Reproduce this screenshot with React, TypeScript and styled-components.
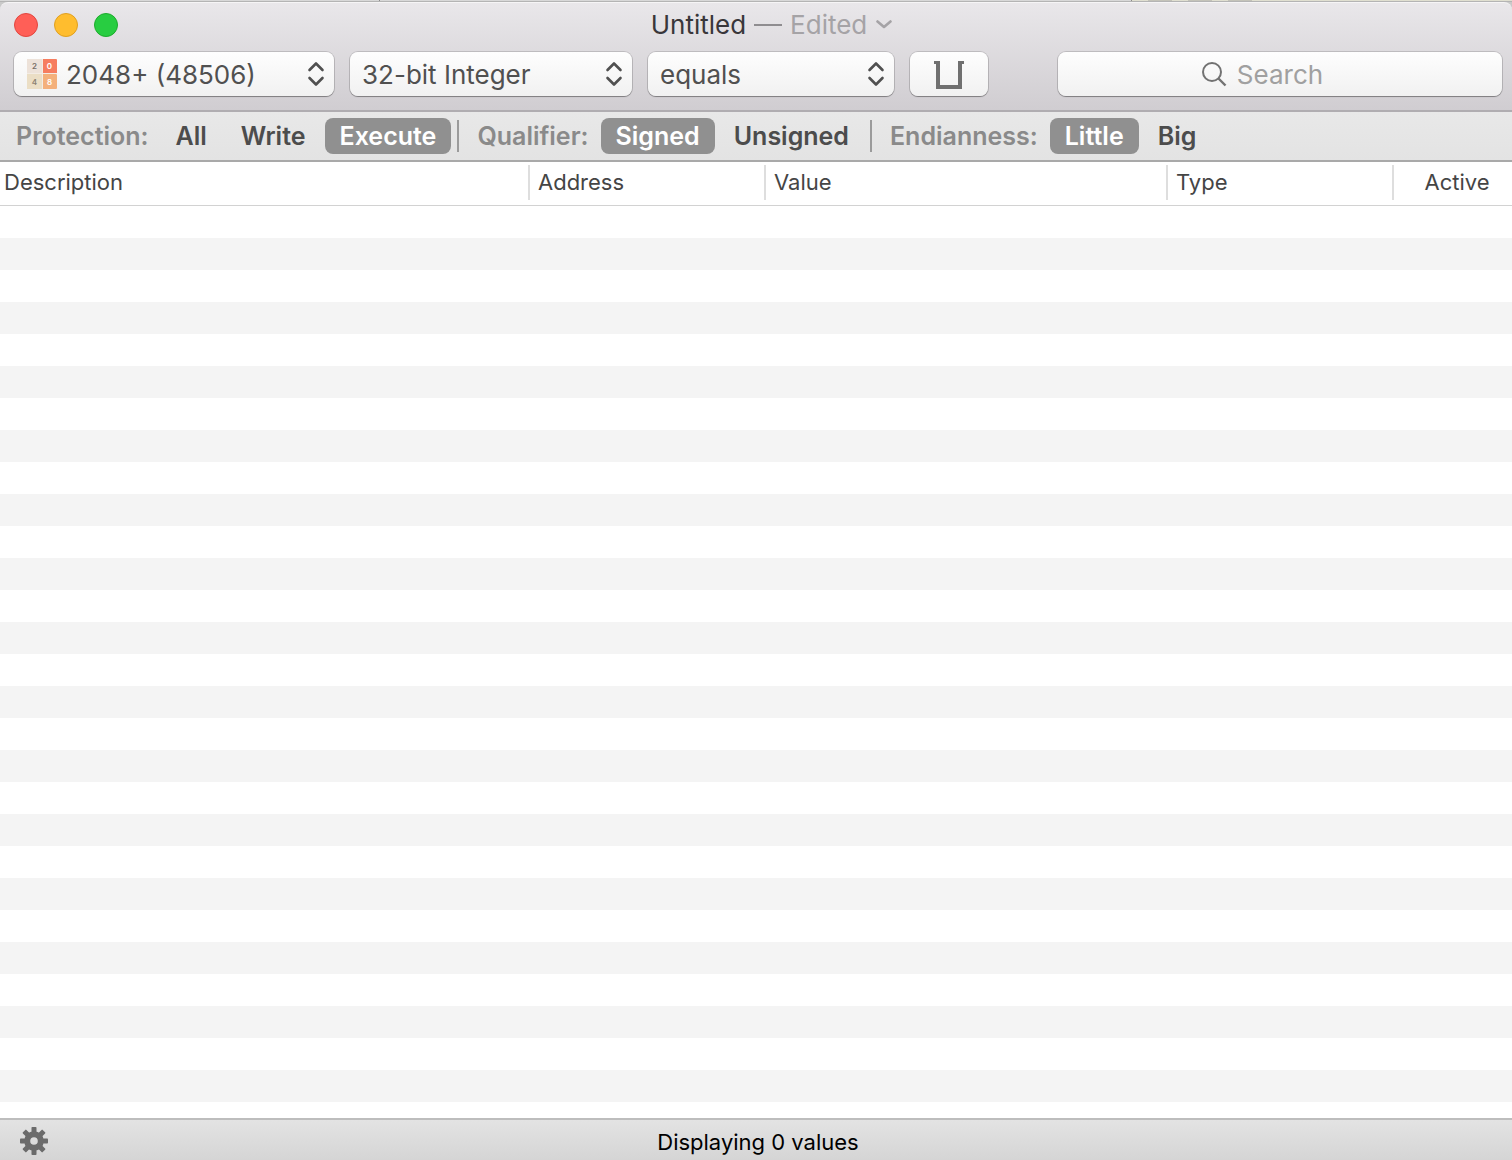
import React, { useState } from "react";
import styled, { createGlobalStyle } from "styled-components";

const GlobalStyle = createGlobalStyle`
  *, *::before, *::after { box-sizing: border-box; }
  body { margin: 0; background: #fff; }
  body, button, input, select {
    font-family: Inter, "Liberation Sans", sans-serif;
  }
`;

const Window = styled.div`
  display: flex;
  flex-direction: column;
  min-height: 100vh;
  background: #c9c9c9;
`;

const Backdrop = styled.div`
  display: flex;
  justify-content: flex-end;
  height: 2px;
  background: linear-gradient(to right, #d8d8d8 0 379px, #8c8c8c 379px 380px, #d8d8d8 380px);
  border-bottom: 1px solid #b4b4b4;
`;

const BackdropEdge = styled.div`
  width: 381px;
  background: linear-gradient(
    to right,
    #8c8c8c 0 1px, #e0dfd0 1px 17px,
    #c4c3b9 17px 41px, #e0dfd0 41px 57px,
    #c4c3b9 57px 81px, #e0dfd0 81px 97px,
    #c4c3b9 97px 121px, #e0dfd0 121px
  );
`;

const Chrome = styled.header`
  background: linear-gradient(#e9e7ea, #d0cdd1);
  border-top: 1px solid #f6f5f6;
  border-bottom: 2px solid #b0adb1;
  border-radius: 8px 8px 0 0;
`;

const TitleBar = styled.div`
  display: grid;
  grid-template-columns: 1fr auto 1fr;
  align-items: center;
  height: 43px;
  padding: 0 14px;
`;

const Lights = styled.div`
  display: flex;
  gap: 16px;
`;

const Light = styled.button<{ $fill: string; $edge: string }>`
  width: 24px;
  height: 24px;
  padding: 0;
  border: 1px solid ${(p) => p.$edge};
  border-radius: 50%;
  background: ${(p) => p.$fill};
`;

const Title = styled.h1`
  display: flex;
  align-items: center;
  gap: 8px;
  margin: 0;
  padding-left: 32px;
  font-size: 26px;
  font-weight: 400;
  line-height: 32px;
  color: #39373a;
`;

const Dash = styled.span`
  width: 28px;
  height: 2px;
  background: #8f8d90;
`;

const Edited = styled.button`
  display: flex;
  align-items: center;
  gap: 8px;
  padding: 0;
  border: 0;
  background: none;
  font-size: 26px;
  line-height: 32px;
  color: #a5a3a6;
`;

const Toolbar = styled.div`
  display: flex;
  align-items: center;
  gap: 16px;
  padding: 6px 10px 14px 14px;
`;

const controlFace = `
  height: 44px;
  border: 0;
  border-radius: 8px;
  background: linear-gradient(#fefefe, #f1f1f1);
  box-shadow: 0 0 0 1px rgba(0, 0, 0, 0.14), 0 1px 1px rgba(0, 0, 0, 0.3);
`;

const PopUp = styled.div<{ $width: number }>`
  display: grid;
  align-items: center;
  width: ${(p) => p.$width}px;
  ${controlFace}
  & > * { grid-area: 1 / 1; }
  & > svg { pointer-events: none; }
`;

const PopUpSelect = styled.select<{ $inset: number }>`
  appearance: none;
  width: 100%;
  height: 44px;
  padding: 0 40px 0 ${(p) => p.$inset}px;
  border: 0;
  border-radius: 8px;
  background: none;
  font-size: 26px;
  color: #505050;
`;

const AppIcon = styled.svg`
  margin-left: 13px;
`;

const Arrows = styled.svg`
  justify-self: end;
  margin-right: 9px;
`;

const ToolButton = styled.button`
  display: flex;
  align-items: center;
  justify-content: center;
  width: 78px;
  padding: 2px 0 0;
  ${controlFace}
`;

const Search = styled.label`
  display: flex;
  flex: 1;
  align-items: center;
  justify-content: center;
  gap: 10px;
  margin-left: 54px;
  padding-right: 36px;
  ${controlFace}
`;

const SearchInput = styled.input`
  field-sizing: content;
  padding: 0;
  border: 0;
  outline: 0;
  background: none;
  font-size: 26px;
  color: #505050;
  &::placeholder { color: #a0a0a0; opacity: 1; }
`;

const FilterBar = styled.nav`
  display: flex;
  align-items: center;
  height: 50px;
  padding-left: 16px;
  background: linear-gradient(#e8e8e8, #e3e3e3);
  border-bottom: 2px solid #a9a9a9;
`;

const Group = styled.div`
  display: flex;
  align-items: center;
  gap: 4px;
  & + & {
    margin-left: 6px;
  }
  & + &::before {
    content: "";
    width: 2px;
    height: 32px;
    margin-right: 14px;
    background: #9b9b9b;
  }
`;

const GroupLabel = styled.span`
  margin-right: 8px;
  font-size: 25px;
  font-weight: 600;
  line-height: 36px;
  color: #8a8a8a;
`;

const Scope = styled.button`
  height: 36px;
  padding: 0 15px;
  border: 0;
  border-radius: 8px;
  background: none;
  font-size: 25px;
  font-weight: 600;
  line-height: 36px;
  color: #4c4c4c;
  &[aria-pressed="true"] {
    background: #909090;
    color: #fff;
  }
`;

const Results = styled.main`
  flex: 1;
  background: repeating-linear-gradient(#fff 0 32px, #f4f4f4 32px 64px) 0 44px;
`;

const Table = styled.table`
  width: 100%;
  table-layout: fixed;
  border-collapse: separate;
  border-spacing: 0;
  background: #fff;
`;

const HeadCell = styled.th<{ $width?: number }>`
  width: ${(p) => (p.$width ? `${p.$width}px` : "auto")};
  height: 44px;
  padding: 3px 0 5px;
  border-bottom: 1px solid #d2d2d2;
  vertical-align: top;
  text-align: left;
  font-size: 22px;
  font-weight: 400;
  color: #454545;
`;

const HeadText = styled.div<{ $divided: boolean; $centered: boolean }>`
  height: 35px;
  padding-left: ${(p) => (p.$divided ? 8 : 4)}px;
  border-left: ${(p) => (p.$divided ? "2px solid #dedede" : "0")};
  line-height: 34px;
  text-align: ${(p) => (p.$centered ? "center" : "left")};
`;

const StatusBar = styled.footer`
  display: grid;
  grid-template-columns: 1fr auto 1fr;
  align-items: center;
  height: 42px;
  padding: 2px 18px 0;
  border-top: 2px solid #bdbdbd;
  background: linear-gradient(#e3e3e3, #d5d5d5);
`;

const GearButton = styled.button`
  display: flex;
  justify-self: start;
  padding: 0;
  border: 0;
  background: none;
`;

const Status = styled.output`
  padding: 2px 0 0 4px;
  font-size: 22px;
  line-height: 32px;
  color: #000;
`;

function UpDown() {
  return (
    <Arrows width="18" height="26" viewBox="0 0 18 26" fill="none" stroke="#505050" strokeWidth="2.6" strokeLinecap="round" strokeLinejoin="round" aria-hidden="true">
      <path d="M2.5 9 9 2.5 15.5 9M2.5 17 9 23.5 15.5 17" />
    </Arrows>
  );
}

function GameIcon() {
  return (
    <AppIcon width="30" height="30" viewBox="0 0 30 30" fontFamily="Inter, sans-serif" fontSize="8" fontWeight="600" textAnchor="middle" aria-hidden="true">
      <rect width="15" height="15" fill="#ede2d9" />
      <rect x="15" width="15" height="15" rx="1" fill="#f67d5f" />
      <rect y="15" width="15" height="15" fill="#ebdec5" />
      <rect x="15" y="15" width="15" height="15" rx="1" fill="#f4b07b" />
      <path d="M15.5 0v30M0 14.5h30" stroke="#f3ece4" strokeWidth="1" />
      <text x="7.5" y="10" fill="#776e65">2</text>
      <text x="22.5" y="10" fill="#fff">0</text>
      <text x="7.5" y="26" fill="#8d8373">4</text>
      <text x="22.5" y="26" fill="#fff">8</text>
    </AppIcon>
  );
}

interface PickerProps {
  label: string;
  width: number;
  inset: number;
  options: string[];
  icon?: React.ReactNode;
}

function Picker({ label, width, inset, options, icon }: PickerProps) {
  return (
    <PopUp $width={width}>
      <PopUpSelect aria-label={label} $inset={inset}>
        {options.map((o) => (
          <option key={o}>{o}</option>
        ))}
      </PopUpSelect>
      {icon}
      <UpDown />
    </PopUp>
  );
}

const filters = [
  { label: "Protection:", options: ["All", "Write", "Execute"], initial: "Execute" },
  { label: "Qualifier:", options: ["Signed", "Unsigned"], initial: "Signed" },
  { label: "Endianness:", options: ["Little", "Big"], initial: "Little" },
];

function FilterGroup({ label, options, initial }: (typeof filters)[number]) {
  const [value, setValue] = useState(initial);
  return (
    <Group role="group" aria-label={label}>
      <GroupLabel>{label}</GroupLabel>
      {options.map((o) => (
        <Scope key={o} type="button" aria-pressed={o === value} onClick={() => setValue(o)}>
          {o}
        </Scope>
      ))}
    </Group>
  );
}

const columns: { name: string; width?: number }[] = [
  { name: "Description" },
  { name: "Address", width: 236 },
  { name: "Value", width: 402 },
  { name: "Type", width: 226 },
  { name: "Active", width: 120 },
];

const teeth = [0, 45, 90, 135, 180, 225, 270, 315];

export default function App() {
  return (
    <Window>
      <GlobalStyle />
      <Backdrop>
        <BackdropEdge />
      </Backdrop>
      <Chrome>
        <TitleBar>
          <Lights>
            <Light type="button" aria-label="Close" $fill="#ff5f57" $edge="#e2463f" />
            <Light type="button" aria-label="Minimize" $fill="#ffbd2e" $edge="#e0a020" />
            <Light type="button" aria-label="Zoom" $fill="#28cd41" $edge="#1dab2c" />
          </Lights>
          <Title>
            Untitled
            <Dash />
            <Edited type="button">
              Edited
              <svg width="18" height="10" viewBox="0 0 18 10" fill="none" stroke="#a5a3a6" strokeWidth="2.6" strokeLinecap="round" strokeLinejoin="round" aria-hidden="true">
                <path d="M2.5 1.5 9 7 15.5 1.5" />
              </svg>
            </Edited>
          </Title>
        </TitleBar>
        <Toolbar>
          <Picker label="Process" width={320} inset={52} options={["2048+ (48506)"]} icon={<GameIcon />} />
          <Picker label="Data type" width={282} inset={12} options={["32-bit Integer"]} />
          <Picker label="Comparison" width={246} inset={12} options={["equals"]} />
          <ToolButton type="button" aria-label="Clear results">
            <svg width="30" height="30" viewBox="0 0 30 30" fill="none" stroke="#707070" strokeWidth="4" aria-hidden="true">
              <path d="M0 2.5H4M30 2.5H26" strokeWidth="3" />
              <path d="M4 1V27H26V1" />
            </svg>
          </ToolButton>
          <Search>
            <svg width="26" height="26" viewBox="0 0 26 26" fill="none" stroke="#727272" strokeWidth="2" aria-hidden="true">
              <circle cx="11" cy="11" r="9" />
              <path d="M17.5 17.5 24.5 24.5" strokeWidth="2.4" />
            </svg>
            <SearchInput type="text" placeholder="Search" aria-label="Search" />
          </Search>
        </Toolbar>
      </Chrome>
      <FilterBar>
        {filters.map((f) => (
          <FilterGroup key={f.label} {...f} />
        ))}
      </FilterBar>
      <Results>
        <Table>
          <thead>
            <tr>
              {columns.map((c, i) => (
                <HeadCell key={c.name} scope="col" $width={c.width}>
                  <HeadText $divided={i > 0} $centered={c.name === "Active"}>
                    {c.name}
                  </HeadText>
                </HeadCell>
              ))}
            </tr>
          </thead>
        </Table>
      </Results>
      <StatusBar>
        <GearButton type="button" aria-label="Options">
          <svg width="32" height="32" viewBox="-16 -16 32 32" fill="#6b6b6b" aria-hidden="true">
            {teeth.map((a) => (
              <rect key={a} x="-2.5" y="-14" width="5" height="7" rx="0.8" transform={`rotate(${a})`} />
            ))}
            <circle r="6.8" fill="none" stroke="#6b6b6b" strokeWidth="6" />
          </svg>
        </GearButton>
        <Status>Displaying 0 values</Status>
      </StatusBar>
    </Window>
  );
}
